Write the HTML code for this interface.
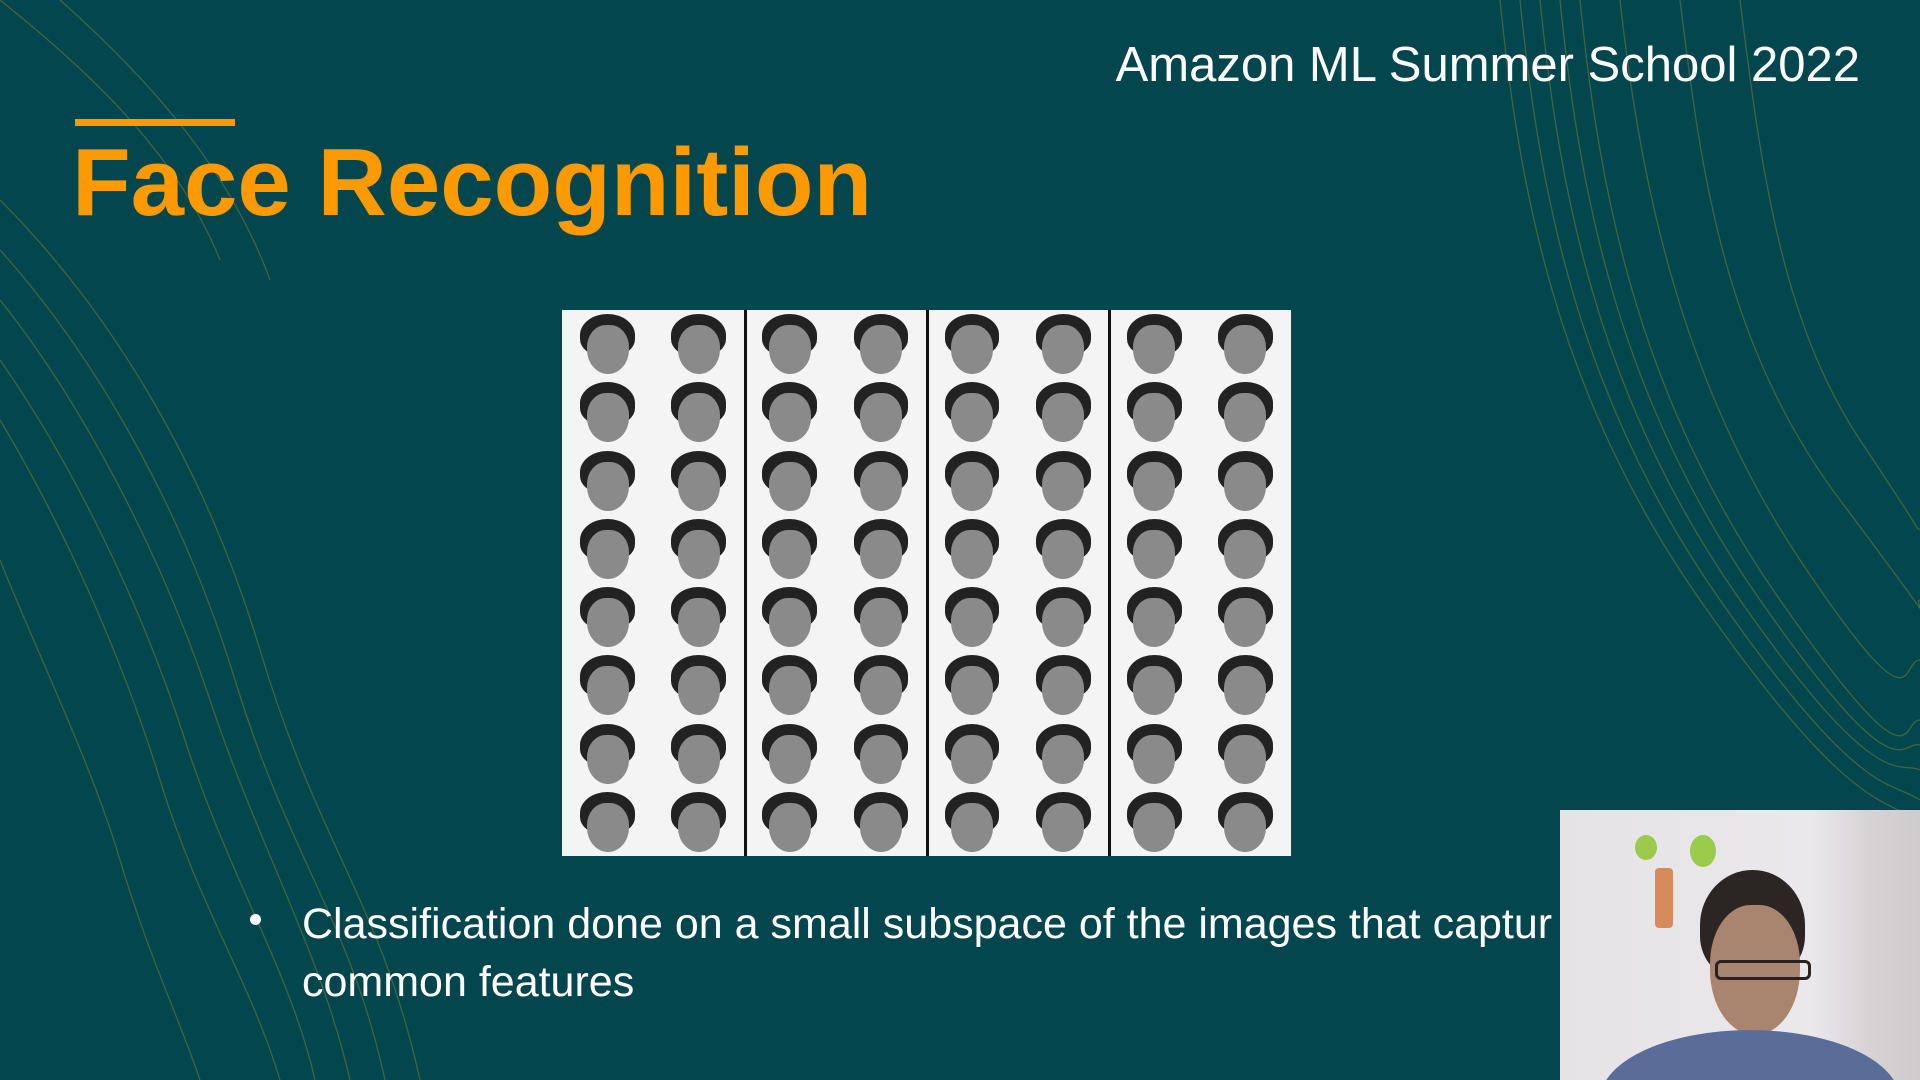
<!DOCTYPE html>
<html><head><meta charset="utf-8"><style>
html,body{margin:0;width:1920px;height:1080px;overflow:hidden}
body{background:#03464d;font-family:"Liberation Sans",sans-serif;position:relative}
.hdr{position:absolute;right:60px;top:37px;color:#fff;font-size:49px;white-space:nowrap}
.bar{position:absolute;left:75px;top:119px;width:160px;height:7px;background:#ff9900}
.title{position:absolute;left:72px;top:128px;color:#ff9900;font-size:96px;font-weight:bold;white-space:nowrap}
.img{position:absolute;left:562px;top:310px;width:729px;height:546px;background:#f4f4f4;display:grid;grid-template-columns:repeat(8,1fr);grid-template-rows:repeat(8,1fr)}
.f{position:relative}
.f:before{content:"";position:absolute;left:20%;top:6%;width:60%;height:62%;background:#222;border-radius:50% 50% 40% 40%}
.f:after{content:"";position:absolute;left:27%;top:22%;width:46%;height:72%;background:#8a8a8a;border-radius:45% 45% 50% 50%}
.sep{position:absolute;top:0;width:3px;height:546px;background:#111}
.b{position:absolute;left:302px;color:#fff;font-size:43px;white-space:nowrap}
.dot{position:absolute;left:250px;top:914px;width:11px;height:11px;border-radius:50%;background:#fff}
.cam{position:absolute;left:1560px;top:810px;width:360px;height:270px;background:linear-gradient(90deg,#e6e3e6 0%,#ebe8ec 70%,#d8d4d6 85%,#cfcbcd 100%);overflow:hidden}
</style></head><body>
<svg style="position:absolute;left:0;top:0;display:block" width="1920" height="1080">
<g fill="none" stroke="#6a7a3a" stroke-width="1.3" opacity="0.6">
<path d="M1500 0 C1520 200 1560 400 1700 600 S1880 800 1920 820"/>
<path d="M1520 0 C1540 200 1580 400 1720 600 S1890 780 1920 800"/>
<path d="M1540 0 C1560 200 1600 400 1740 600 S1900 760 1920 770"/>
<path d="M1560 0 C1580 200 1620 400 1760 600 S1900 740 1920 745"/>
<path d="M1580 0 C1600 200 1640 400 1780 600 S1900 720 1920 720"/>
<path d="M1620 0 C1640 180 1680 380 1800 560 S1900 660 1920 660"/>
<path d="M1680 0 C1700 160 1720 340 1840 500 S1910 600 1920 600"/>
<path d="M1740 0 C1760 160 1780 320 1860 440 S1910 520 1920 530"/>
<path d="M0 200 C100 300 200 450 260 650 S380 900 420 1080"/>
<path d="M0 250 C90 350 180 500 235 680 S350 920 385 1080"/>
<path d="M0 300 C80 400 160 550 210 700 S320 950 350 1080"/>
<path d="M0 360 C70 460 140 600 185 740 S290 970 315 1080"/>
<path d="M0 420 C60 520 120 650 160 780 S250 980 280 1080"/>
<path d="M0 560 C40 660 90 760 120 860 S180 1020 200 1080"/>
<path d="M0 0 C100 80 180 160 220 260"/>
<path d="M60 0 C150 80 230 170 270 280"/>
</g></svg>
<div class="hdr">Amazon ML Summer School 2022</div>
<div class="bar"></div>
<div class="title">Face Recognition</div>
<div class="img">
<div class="f"></div><div class="f"></div><div class="f"></div><div class="f"></div><div class="f"></div><div class="f"></div><div class="f"></div><div class="f"></div>
<div class="f"></div><div class="f"></div><div class="f"></div><div class="f"></div><div class="f"></div><div class="f"></div><div class="f"></div><div class="f"></div>
<div class="f"></div><div class="f"></div><div class="f"></div><div class="f"></div><div class="f"></div><div class="f"></div><div class="f"></div><div class="f"></div>
<div class="f"></div><div class="f"></div><div class="f"></div><div class="f"></div><div class="f"></div><div class="f"></div><div class="f"></div><div class="f"></div>
<div class="f"></div><div class="f"></div><div class="f"></div><div class="f"></div><div class="f"></div><div class="f"></div><div class="f"></div><div class="f"></div>
<div class="f"></div><div class="f"></div><div class="f"></div><div class="f"></div><div class="f"></div><div class="f"></div><div class="f"></div><div class="f"></div>
<div class="f"></div><div class="f"></div><div class="f"></div><div class="f"></div><div class="f"></div><div class="f"></div><div class="f"></div><div class="f"></div>
<div class="f"></div><div class="f"></div><div class="f"></div><div class="f"></div><div class="f"></div><div class="f"></div><div class="f"></div><div class="f"></div>
<div class="sep" style="left:182px"></div><div class="sep" style="left:364px"></div><div class="sep" style="left:546px"></div>
</div>
<div class="dot"></div>
<div class="b" style="top:900px">Classification done on a small subspace of the images that captur</div>
<div class="b" style="top:958px">common features</div>
<div class="cam">
<div style="position:absolute;left:140px;top:60px;width:105px;height:110px;background:#2b2624;border-radius:50% 50% 40% 40%"></div>
<div style="position:absolute;left:150px;top:95px;width:90px;height:130px;background:#a9846e;border-radius:45% 45% 50% 50%"></div>
<div style="position:absolute;left:155px;top:150px;width:90px;height:14px;border:3px solid #2a2220;border-radius:6px"></div>
<div style="position:absolute;left:40px;top:220px;width:300px;height:140px;background:#5a6c98;border-radius:50% 50% 0 0"></div>
<div style="position:absolute;left:95px;top:58px;width:18px;height:60px;background:#d98a5a;border-radius:4px"></div>
<div style="position:absolute;left:75px;top:25px;width:22px;height:25px;background:#9acb4a;border-radius:50%"></div>
<div style="position:absolute;left:130px;top:25px;width:26px;height:32px;background:#9acb4a;border-radius:50%"></div>
</div>
</body></html>
